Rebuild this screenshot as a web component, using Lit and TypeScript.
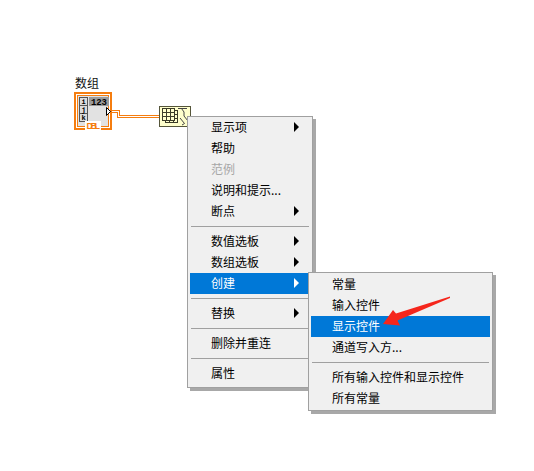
import { LitElement, html, css, svg } from "lit";
import { customElement } from "lit/decorators.js";

type Item = { t?: string; arrow?: boolean; dis?: boolean; hi?: boolean; sep?: boolean };

const main: Item[] = [
  { t: "显示项", arrow: true }, { t: "帮助" }, { t: "范例", dis: true }, { t: "说明和提示..." }, { t: "断点", arrow: true },
  { sep: true },
  { t: "数值选板", arrow: true }, { t: "数组选板", arrow: true }, { t: "创建", arrow: true, hi: true },
  { sep: true },
  { t: "替换", arrow: true },
  { sep: true },
  { t: "删除并重连" },
  { sep: true },
  { t: "属性" },
];
const sub: Item[] = [
  { t: "常量" }, { t: "输入控件" }, { t: "显示控件", hi: true }, { t: "通道写入方..." },
  { sep: true },
  { t: "所有输入控件和显示控件" }, { t: "所有常量" },
];

const OR = "#f57d0f";

@customElement("app-root")
export class AppRoot extends LitElement {
  static styles = css`
    :host { display: block; position: relative; width: 534px; height: 471px; background: #fff; overflow: hidden;
      font-family: "Noto Sans CJK SC", "Noto Sans", sans-serif; font-size: 12px; color: #000; }
    .label { position: absolute; left: 75px; top: 75px; line-height: 16px; color: #111; }
    .diagram { position: absolute; left: 0; top: 0; }
    .menu { position: absolute; box-sizing: border-box; background: #f0f0f0; border: 1px solid #a0a0a0;
      box-shadow: 3px 3px 0 #a8a8a8; padding: 0 2px; display: flex; flex-direction: column; }
    .m1 { left: 187px; top: 116px; width: 126px; height: 272px; }
    .m2 { left: 308px; top: 272px; width: 185px; height: 139px; padding-top: 1px; }
    .row { height: 21px; line-height: 20px; flex: none; position: relative; white-space: nowrap; padding-left: 21px; }
    .dis { color: #a6a6a6; }
    .hi { background: #0078d7; color: #fff; }
    .sep { height: 1px; background: #a0a0a0; flex: none; margin: 4px 1px; }
    .arrow { position: absolute; left: 104px; top: 5px; width: 0; height: 0; border-left: 5px solid #000;
      border-top: 5px solid transparent; border-bottom: 5px solid transparent; }
    .hi .arrow { border-left-color: #fff; }
    .overlay { position: absolute; left: 380px; top: 290px; }
    .cell { font-family: "Liberation Mono", monospace; font-weight: bold; font-size: 7px; }
    .num { font-family: "Liberation Mono", monospace; font-weight: bold; font-size: 9px; }
    .dbl { font-family: "Liberation Sans", sans-serif; font-weight: bold; font-size: 9px; }
    .crisp { shape-rendering: crispEdges; }
  `;

  private menu(items: Item[], cls: string) {
    return html`<div class="menu ${cls}">
      ${items.map((i) =>
        i.sep
          ? html`<div class="sep"></div>`
          : html`<div class="row ${i.dis ? "dis" : ""} ${i.hi ? "hi" : ""}">${i.t}${i.arrow ? html`<span class="arrow"></span>` : ""}</div>`
      )}
    </div>`;
  }

  private node() {
    const grid = (dx: number, dy: number) => svg`<g transform="translate(${dx} ${dy})" fill="none" stroke="#3c3c28" class="crisp">
      <rect x="162.5" y="108.5" width="12" height="12" fill="#ffffcc"/>
      <path d="M166.5 108.5V120.5M170.5 108.5V120.5M162.5 112.5H174.5M162.5 116.5H174.5"/>
    </g>`;
    return svg`
      <rect x="159.5" y="106.5" width="31" height="20" fill="#ffffcc" stroke="#55553a" stroke-width="1.6" class="crisp"/>
      ${grid(3, 2)}${grid(0, 0)}
      <path d="M178 108.5H187M181.5 108.5L184 112V116L188 121" fill="none" stroke="#444" stroke-width="1"/>
      <path d="M180 118L184.5 123.5L182 125" fill="none" stroke="#444" stroke-width="1"/>
    `;
  }

  private terminal() {
    return svg`
      <path d="M110 111.5H118.5V116.5H159.5" fill="none" stroke=${OR} stroke-width="3" class="crisp"/>
      <path d="M110 111.5H118.5V116.5H159.5" fill="none" stroke="#fff" stroke-width="1" class="crisp"/>
      <rect x="74" y="92" width="38" height="38" fill=${OR} class="crisp"/>
      <rect x="76" y="94" width="34" height="34" fill="#fff" class="crisp"/>
      <rect x="77" y="95" width="32" height="32" fill=${OR} class="crisp"/>
      <rect x="78" y="96" width="30" height="30" fill="#e2e2e2" class="crisp"/>
      <rect x="79" y="97" width="9" height="25" fill="#555" class="crisp"/>
      <rect x="80" y="98" width="7" height="7" fill="#dcdcdc" class="crisp"/>
      <rect x="80" y="106" width="7" height="7" fill="#dcdcdc" class="crisp"/>
      <rect x="80" y="114" width="7" height="7" fill="#dcdcdc" class="crisp"/>
      <text class="cell" x="81.5" y="104" fill="#000">i</text>
      <text class="cell" x="81.5" y="111.5" fill="#000">j</text>
      <text class="cell" x="81.5" y="120" fill="#000">k</text>
      <rect x="89" y="97" width="20" height="9" fill="#9a9a9a" class="crisp"/>
      <text class="num" x="91" y="105" fill="#000" textLength="16">123</text>
      <path d="M106.5 107.5L110.5 111.5L106.5 115.5Z" fill="#fff" stroke="#000" stroke-width="1"/>
      <rect x="85" y="121" width="16" height="9" fill="#fff" class="crisp"/>
      <text class="dbl" x="86.5" y="129" fill=${OR} textLength="13.5">DBL</text>
    `;
  }

  render() {
    return html`
      <div class="label">数组</div>
      <svg class="diagram" width="534" height="471" viewBox="0 0 534 471">
        ${this.terminal()}${this.node()}
      </svg>
      ${this.menu(main, "m1")}
      ${this.menu(sub, "m2")}
      <svg class="overlay" width="75" height="40" viewBox="380 290 75 40">
        <path d="M450 296.5L396 313.5L393 310L383 324L400 325.5L397.5 320.5L450 298Z" fill="#f5261c"/>
      </svg>
    `;
  }
}
